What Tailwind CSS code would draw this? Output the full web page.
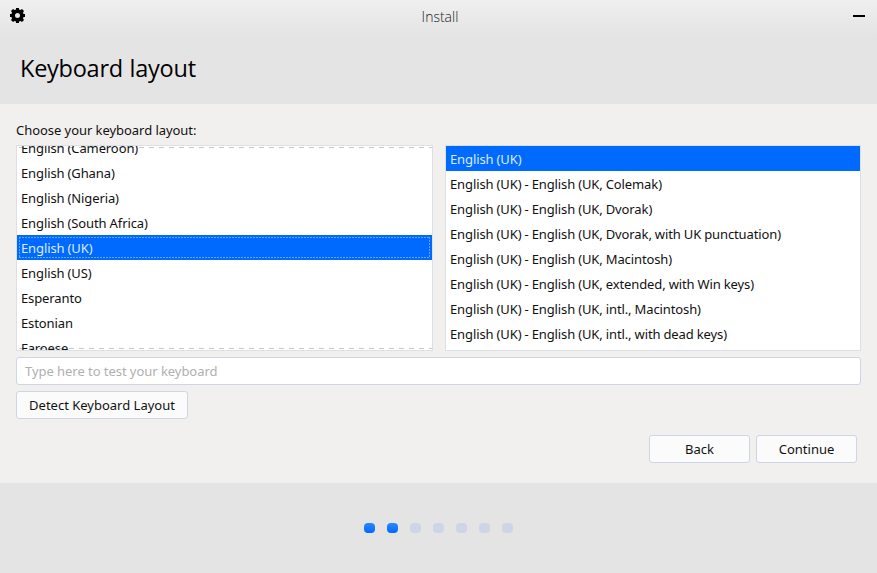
<!DOCTYPE html>
<html lang="en">
<head>
<meta charset="utf-8">
<title>Install</title>
<script src="https://cdn.jsdelivr.net/npm/@tailwindcss/browser@4"></script>
</head>
<body class="w-[877px] h-[573px] overflow-hidden flex flex-col bg-[#f1f0ee] font-['Noto_Sans',sans-serif] text-[13px] leading-[25px] text-[#111]">
<header class="h-[104px] shrink-0 bg-[#e4e4e4] bg-[linear-gradient(#efefef,#e4e4e4_36px)]">
  <div class="h-8 px-[10px] grid grid-cols-3 items-center">
    <svg class="w-[15px] h-[15px] -mt-[2px]" viewBox="0 0 15 15"><path fill="#000" fill-rule="evenodd" d="M6 0h3v1.500l1.500.5L12 1 14 3l-1 1.500.5 1.500H15v3h-1.500l-.5 1.500L14 12 12 14l-1.500-1L9 13.500V15H6v-1.500L4.500 13 3 14 1 12l1-1.500L1.500 9H0V6h1.500L2 4.500 1 3 3 1l1.500 1L6 1.500zM7.500 5a2.500 2.500 0 1 0 0 5a2.500 2.500 0 1 0 0-5z"/></svg>
    <div class="text-center pl-[3px] font-['Open_Sans'] font-light text-[14px] text-[#222]">Install</div>
    <div class="justify-self-end mr-[2px] w-3 h-[2px] bg-black"></div>
  </div>
  <h1 class="pl-5 pt-5 font-['Open_Sans',sans-serif] text-[23.5px] tracking-[-0.25px] [word-spacing:0.8px] font-[370] leading-8 text-black">Keyboard layout</h1>
</header>
<main class="h-[379px] shrink-0 px-4 pt-[14px]">
  <div class="h-[27px] tracking-[-0.05px]">Choose your keyboard layout:</div>
  <div class="flex gap-3 h-[206px] tracking-[-0.11px] [word-spacing:-0.2px] leading-[27px]">
    <div class="relative w-[417px] border border-[#dcdfe6] bg-white overflow-hidden whitespace-nowrap">
      <div class="absolute left-[2px] right-0 top-px h-px bg-[repeating-linear-gradient(90deg,#c9c9c9_0_5px,transparent_5px_10px)]"></div>
      <div class="absolute left-[2px] right-0 bottom-px h-px bg-[repeating-linear-gradient(90deg,#c9c9c9_0_5px,transparent_5px_10px)]"></div>
      <div class="relative -mt-[11px]">
        <div class="h-[25px] pl-1">English (Cameroon)</div>
        <div class="h-[25px] pl-1">English (Ghana)</div>
        <div class="h-[25px] pl-1">English (Nigeria)</div>
        <div class="h-[25px] pl-1">English (South Africa)</div>
        <div class="relative h-[25px] pl-1 bg-[#006aff] text-[#dceaff]">English (UK)
          <div class="absolute left-[2px] right-[2px] top-[2px] bottom-[2px] bg-[repeating-linear-gradient(90deg,#5fa2ff_0_2px,transparent_2px_3px),repeating-linear-gradient(90deg,#5fa2ff_0_2px,transparent_2px_3px),repeating-linear-gradient(#5fa2ff_0_2px,transparent_2px_3px),repeating-linear-gradient(#5fa2ff_0_2px,transparent_2px_3px)] bg-no-repeat [background-size:100%_1px,100%_1px,1px_100%,1px_100%] [background-position:top,bottom,left,right]"></div>
        </div>
        <div class="h-[25px] pl-1">English (US)</div>
        <div class="h-[25px] pl-1">Esperanto</div>
        <div class="h-[25px] pl-1">Estonian</div>
        <div class="h-[25px] pl-1">Faroese</div>
      </div>
    </div>
    <div class="w-[416px] border border-[#dcdfe6] bg-white overflow-hidden whitespace-nowrap">
      <div class="h-[25px] pl-1 bg-[#006aff] text-[#dceaff]">English (UK)</div>
      <div class="h-[25px] pl-1">English (UK) - English (UK, Colemak)</div>
      <div class="h-[25px] pl-1">English (UK) - English (UK, Dvorak)</div>
      <div class="h-[25px] pl-1">English (UK) - English (UK, Dvorak, with UK punctuation)</div>
      <div class="h-[25px] pl-1">English (UK) - English (UK, Macintosh)</div>
      <div class="h-[25px] pl-1">English (UK) - English (UK, extended, with Win keys)</div>
      <div class="h-[25px] pl-1">English (UK) - English (UK, intl., Macintosh)</div>
      <div class="h-[25px] pl-1">English (UK) - English (UK, intl., with dead keys)</div>
    </div>
  </div>
  <input class="block mt-[6px] w-[845px] h-7 px-2 rounded-[3px] border border-[#cdd5e6] bg-white tracking-[-0.05px] placeholder:text-[#b0b0b0] placeholder:opacity-100" placeholder="Type here to test your keyboard">
  <button class="block mt-[6px] w-[172px] h-7 rounded-[3px] border border-[#cdd5e6] bg-[#fbfbfc]">Detect Keyboard Layout</button>
  <div class="flex justify-end gap-[6px] mt-4 pr-1">
    <button class="w-[101px] h-7 rounded-[3px] border border-[#cdd5e6] bg-[#fbfbfc]">Back</button>
    <button class="w-[101px] h-7 rounded-[3px] border border-[#cdd5e6] bg-[#fbfbfc]">Continue</button>
  </div>
</main>
<footer class="h-[90px] shrink-0 bg-[#e4e4e4] pl-[364px] flex items-center gap-3">
  <div class="w-[11px] h-[10px] rounded-[4px] bg-linear-to-b from-[#2b87ff] to-[#0068ff]"></div>
  <div class="w-[11px] h-[10px] rounded-[4px] bg-linear-to-b from-[#2b87ff] to-[#0068ff]"></div>
  <div class="w-[11px] h-[10px] rounded-[4px] bg-[#cdd5e6]"></div>
  <div class="w-[11px] h-[10px] rounded-[4px] bg-[#cdd5e6]"></div>
  <div class="w-[11px] h-[10px] rounded-[4px] bg-[#cdd5e6]"></div>
  <div class="w-[11px] h-[10px] rounded-[4px] bg-[#cdd5e6]"></div>
  <div class="w-[11px] h-[10px] rounded-[4px] bg-[#cdd5e6]"></div>
</footer>
</body>
</html>
